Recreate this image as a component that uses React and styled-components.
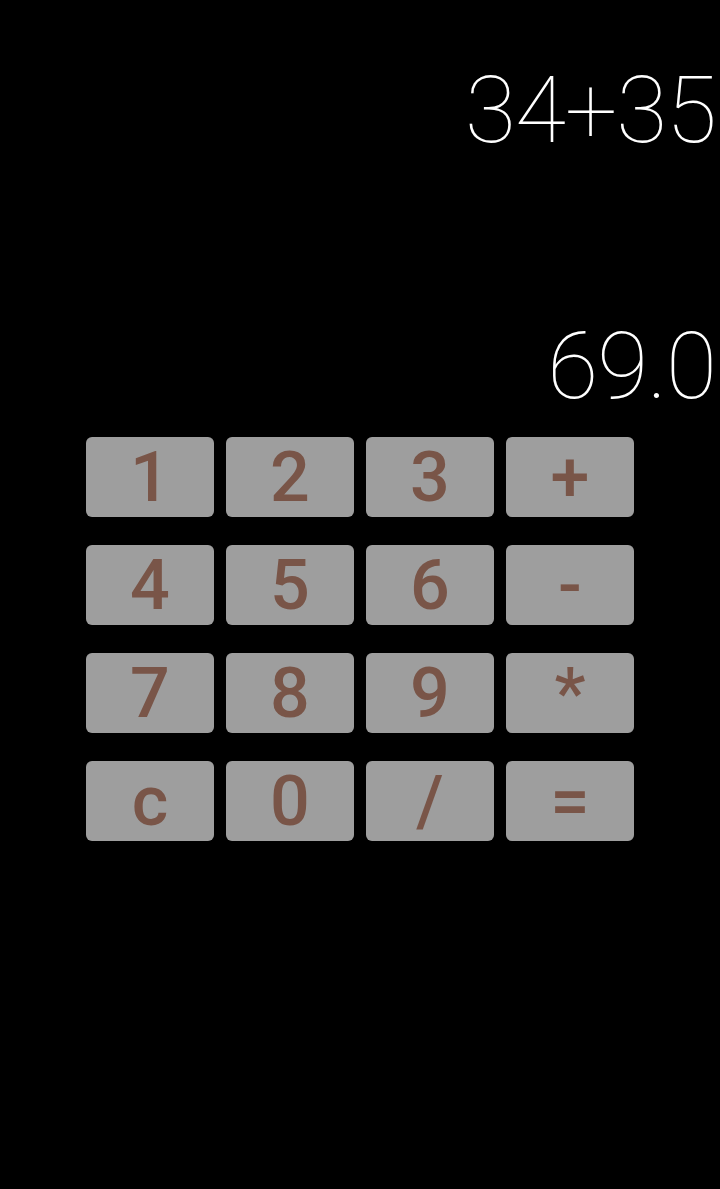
import React from "react";
import styled, { createGlobalStyle } from "styled-components";

const GlobalStyle = createGlobalStyle`
  html, body {
    margin: 0;
    background: #000;
  }
  body {
    font-family: Roboto, "Noto Sans", sans-serif;
  }
`;

const keys = [
  ["1", "2", "3", "+"],
  ["4", "5", "6", "-"],
  ["7", "8", "9", "*"],
  ["c", "0", "/", "="],
];

const App = () => {
  return (
    <>
      <GlobalStyle />
      <Screen>
        <Expression>34+35</Expression>
        <Result>69.0</Result>
        <Keypad>
          {keys.flat().map((k) => (
            <Key key={k}>{k}</Key>
          ))}
        </Keypad>
      </Screen>
    </>
  );
};

export default App;

const Screen = styled.div`
  width: 720px;
  height: 1189px;
  background: #000;
  display: flex;
  flex-direction: column;
  padding-top: 63px;
  box-sizing: border-box;
`;

const Expression = styled.div`
  color: #fff;
  font-family: Roboto, sans-serif;
  font-weight: 100;
  font-size: 93px;
  letter-spacing: -1px;
  line-height: 96px;
  text-align: right;
  padding-right: 4px;
`;

const Result = styled(Expression)`
  margin-top: 160px;
`;

const Keypad = styled.div`
  margin: 22px auto 0;
  display: grid;
  grid-template-columns: repeat(4, 128px);
  grid-auto-rows: 80px;
  column-gap: 12px;
  row-gap: 28px;
`;

const Key = styled.button`
  border: none;
  border-radius: 6px;
  background: #9e9e9e;
  color: #795548;
  font-family: Roboto, sans-serif;
  font-weight: 500;
  font-size: 70px;
  line-height: 1;
  padding: 0;
  display: flex;
  align-items: center;
  justify-content: center;
`;
